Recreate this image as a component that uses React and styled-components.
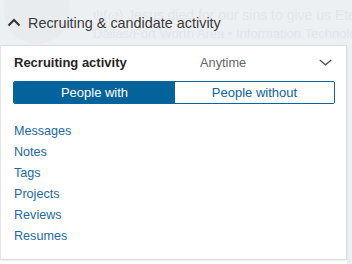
import React from 'react';
import styled, { createGlobalStyle } from 'styled-components';

const GlobalStyle = createGlobalStyle`
  body {
    margin: 0;
    background: #edf0f3;
    font-family: "Liberation Sans", Arial, sans-serif;
  }
`;

const Page = styled.div`
  position: relative;
  width: 352px;
  height: 264px;
  overflow: hidden;
`;

const Ghost = styled.div`
  position: absolute;
  top: 0;
  left: 0;
  width: 100%;
  height: 45px;
  overflow: hidden;
  color: #e2e6ea;
  .avatar {
    position: absolute;
    left: 4px;
    top: -22px;
    width: 66px;
    height: 66px;
    border-radius: 50%;
    background: #e9ecef;
  }
  .line {
    position: absolute;
    left: 93px;
    white-space: nowrap;
    font-size: 13px;
  }
  .one {
    top: 7px;
    font-size: 14px;
  }
  .two {
    top: 26px;
  }
`;

const Header = styled.div`
  position: relative;
  height: 45px;
  display: flex;
  align-items: center;
  padding-left: 7px;
  gap: 7px;
  font-size: 14.4px;
  color: #3b3b3b;
`;

const Panel = styled.div`
  position: relative;
  box-sizing: border-box;
  width: 347px;
  height: 215px;
  background: #fff;
  border: 1px solid #dadde1;
  border-left: 1px solid #e2e4e7;
  padding: 0 11px 0 12px;
  box-shadow: 0 1px 2px rgba(0, 0, 0, 0.08);
`;

const TopRow = styled.div`
  height: 32px;
  display: flex;
  align-items: center;
`;

const Title = styled.div`
  flex: 0 0 186px;
  padding-left: 1px;
  font-weight: 700;
  font-size: 13px;
  color: #262626;
`;

const Select = styled.div`
  flex: 1;
  display: flex;
  align-items: center;
  justify-content: space-between;
  padding-right: 3px;
  font-size: 12.8px;
  color: #666;
`;

const Toggle = styled.div`
  margin-top: 3px;
  height: 23px;
  box-sizing: border-box;
  display: grid;
  grid-template-columns: 161px 1fr;
  border: 1px solid #0b64a0;
  border-radius: 2px;
  overflow: hidden;
`;

const ToggleOption = styled.div`
  display: flex;
  align-items: center;
  justify-content: center;
  font-size: 13px;
  background: ${(p) => (p.$active ? '#04639b' : '#fff')};
  color: ${(p) => (p.$active ? '#fff' : '#0b64a0')};
`;

const List = styled.ul`
  list-style: none;
  margin: 17px 0 0;
  padding: 0 0 0 1px;
`;

const Item = styled.li`
  height: 21px;
  line-height: 21px;
  font-size: 12.6px;
  color: #1b6aa3;
`;

const Below = styled.div`
  width: 347px;
  background: #fff;
  padding: 1px 0 0 14px;
  box-sizing: border-box;
  font-weight: 700;
  font-size: 13px;
  color: #333;
  line-height: 15px;
`;

const ChevronUp = () => (
  <svg width="14" height="9" viewBox="0 0 14 9">
    <path d="M1.5 7.5 L7 2 L12.5 7.5" fill="none" stroke="#333" strokeWidth="2" />
  </svg>
);

const ChevronDown = () => (
  <svg width="13" height="7" viewBox="0 0 13 7">
    <path d="M0.8 1 L6.5 5.8 L12.2 1" fill="none" stroke="#555" strokeWidth="1.3" />
  </svg>
);

const items = ['Messages', 'Notes', 'Tags', 'Projects', 'Reviews', 'Resumes'];

export default function App() {
  return (
    <Page>
      <GlobalStyle />
      <Ghost>
        <div className="avatar" />
        <div className="line one">ψ(ω) Jesus died for our sins to give us Eternal life</div>
        <div className="line two">Dallas/Fort Worth Area • Information Technology</div>
      </Ghost>
      <Header>
        <ChevronUp />
        <span>Recruiting &amp; candidate activity</span>
      </Header>
      <Panel>
        <TopRow>
          <Title>Recruiting activity</Title>
          <Select>
            <span>Anytime</span>
            <ChevronDown />
          </Select>
        </TopRow>
        <Toggle>
          <ToggleOption $active>People with</ToggleOption>
          <ToggleOption>People without</ToggleOption>
        </Toggle>
        <List>
          {items.map((t) => (
            <Item key={t}>{t}</Item>
          ))}
        </List>
      </Panel>
      <Below>Linkedin applicants</Below>
    </Page>
  );
}
